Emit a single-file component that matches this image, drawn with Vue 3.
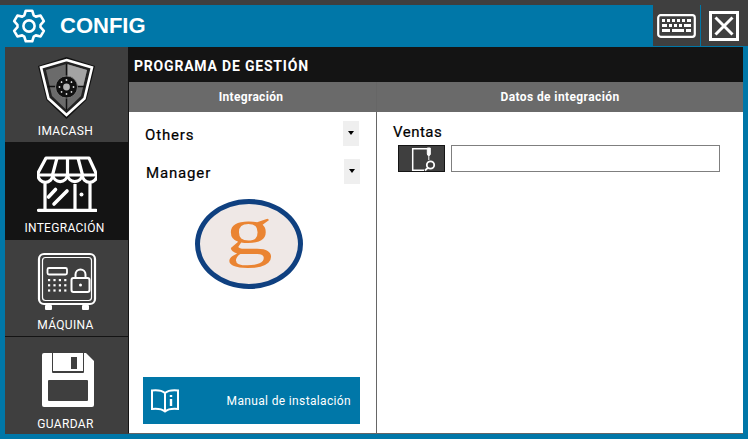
<script setup>
const studs = [0, 45, 90, 135, 180, 225, 270, 315]
const rows = [0, 1, 2]
const cols = [0, 1, 2, 3]

function gearPath() {
  const c = 17
  const pt = (r, deg) => {
    const a = (deg * Math.PI) / 180
    return `${(c + r * Math.cos(a)).toFixed(2)} ${(c + r * Math.sin(a)).toFixed(2)}`
  }
  const parts = []
  for (let i = 0; i < 6; i++) {
    const a = -90 + i * 60
    parts.push(pt(11.6, a - 24), pt(15.6, a - 12), pt(15.6, a + 12), pt(11.6, a + 24))
  }
  return 'M' + parts.join('L') + 'Z'
}
const gear = gearPath()
</script>

<template>
  <div class="app">
    <div class="strip"></div>
    <header class="titlebar">
      <svg class="gear" viewBox="0 0 34 34" fill="none" stroke="#fff" stroke-width="2.6" stroke-linejoin="round">
        <path :d="gear"/>
        <circle cx="17" cy="17" r="5.6"/>
      </svg>
      <h1 class="title">CONFIG</h1>
      <div class="tools">
        <button class="tool tool-keys">
          <svg width="39" height="24" viewBox="0 0 39 24">
            <rect x="1.200" y="1.200" width="36.600" height="21.600" rx="2.500" fill="none" stroke="#fff" stroke-width="2.200"/>
            <g fill="#fff">
              <rect x="5" y="5" width="3" height="3"/><rect x="10" y="5" width="3" height="3"/><rect x="15" y="5" width="3" height="3"/><rect x="20" y="5" width="3" height="3"/><rect x="25" y="5" width="3" height="3"/><rect x="30" y="5" width="4" height="3"/>
              <rect x="5" y="10" width="5" height="3"/><rect x="12" y="10" width="3" height="3"/><rect x="17" y="10" width="3" height="3"/><rect x="22" y="10" width="3" height="3"/><rect x="27" y="10" width="7" height="3"/>
              <rect x="5" y="15" width="8" height="3"/><rect x="15" y="15" width="12" height="3"/><rect x="29" y="15" width="5" height="3"/>
            </g>
          </svg>
        </button>
        <button class="tool tool-close">
          <svg width="30" height="30" viewBox="0 0 30 30">
            <rect x="1.500" y="1.500" width="27" height="27" fill="none" stroke="#fff" stroke-width="3"/>
            <path d="M6.500 6.500l17 17M23.500 6.500l-17 17" stroke="#fff" stroke-width="3" fill="none"/>
          </svg>
        </button>
      </div>
    </header>

    <div class="body">
      <nav class="sidebar">
        <div class="nav-item item-shield">
          <svg width="60" height="64" viewBox="36 56 60 64">
            <path d="M65.500 57L94 66L85.500 100L65.500 119L45.500 100L37 66Z" fill="#111"/>
            <path d="M65.500 60L91 67.500L83.500 98.500L65.500 115L47.500 98.500L40 67.500Z" fill="#222" stroke="#fff" stroke-width="2.600"/>
            <path d="M65.500 64L86 70L80 96L65.500 110L51 96L45 70Z" fill="#6b6b6b"/>
            <path d="M66.500 64.300L86 70L82.200 86H66.500Z" fill="#a3a3a3"/>
            <path d="M65.500 64V110M46.500 86.500H84" stroke="#111" stroke-width="1.500"/>
            <circle cx="65.500" cy="87" r="11" fill="#111" stroke="#8a8a8a" stroke-width=".8"/>
            <circle cx="65.500" cy="87" r="3.400" fill="#b5b5b5"/>
            <g fill="#ddd">
              <circle v-for="t in studs" :key="t" cx="65.500" cy="80" r=".9" :transform="`rotate(${t} 65.500 87)`"/>
            </g>
          </svg>
          <span class="nav-label">IMACASH</span>
        </div>
        <div class="nav-item item-store active">
          <svg width="60" height="56" viewBox="36 156 60 56" fill="none" stroke="#fff" stroke-width="3.200" stroke-linejoin="round">
            <path d="M45 158H88L94.500 172C95.500 174 95 175 93 175H39C37 175 36.500 174 37.500 172Z"/>
            <path d="M56 158L51.500 175M66.500 158V175M77 158L81.500 175"/>
            <path d="M37 175a7.400 7.400 0 0 0 14.800 0a7.400 7.400 0 0 0 14.700 0a7.400 7.400 0 0 0 14.700 0a7.400 7.400 0 0 0 14.800 0"/>
            <path d="M44 184V210M89 184V210M37.500 210.300H95" stroke-linecap="round"/>
            <path d="M74 184V210"/>
            <path d="M47.500 197L54.500 189.500M53 204L66 191" stroke-width="3.600" stroke-linecap="round"/>
            <circle cx="80.500" cy="194.500" r="2" fill="#fff" stroke="none"/>
          </svg>
          <span class="nav-label">INTEGRACIÓN</span>
        </div>
        <div class="nav-item item-safe">
          <svg width="60" height="60" viewBox="36 252 60 60" fill="none" stroke="#fff">
            <rect x="38" y="254" width="56" height="50" rx="5" stroke-width="2.200"/>
            <rect x="41.500" y="257.500" width="49" height="43" rx="3" stroke-width="1.200"/>
            <rect x="46.500" y="268" width="19.500" height="6.500" rx="1.500" stroke-width="1.800"/>
            <g fill="#fff" stroke="none">
              <template v-for="r in rows" :key="r">
                <rect v-for="c in cols" :key="c" :x="47 + c * 5.400" :y="279 + r * 5.200" width="2.200" height="2.200"/>
              </template>
              <rect x="44" y="305" width="7" height="5" rx="1"/>
              <rect x="81" y="305" width="7" height="5" rx="1"/>
            </g>
            <path d="M74.500 278v-3.500a5 5 0 0 1 10 0v3.500" stroke-width="2"/>
            <rect x="70.500" y="278" width="18" height="14" rx="2" stroke-width="2"/>
            <circle cx="79.500" cy="285" r="1.500" fill="#fff" stroke="none"/>
          </svg>
          <span class="nav-label">MÁQUINA</span>
        </div>
        <div class="nav-item item-disk">
          <svg width="52" height="54" viewBox="0 0 52 54">
            <path d="M2 0H44L52 8V52a2 2 0 0 1-2 2H2a2 2 0 0 1-2-2V2a2 2 0 0 1 2-2Z" fill="#fff"/>
            <path d="M10 0H42V19a1 1 0 0 1-1 1H11a1 1 0 0 1-1-1Z" fill="#3f3f3f"/>
            <path d="M11 0H41V18H11Z" fill="#fff"/>
            <rect x="29" y="4" width="6" height="12" fill="#3f3f3f"/>
            <rect x="6" y="27" width="40" height="21" rx="1" fill="#3f3f3f"/>
          </svg>
          <span class="nav-label">GUARDAR</span>
        </div>
      </nav>

      <main class="main">
        <div class="page-title">PROGRAMA DE GESTIÓN</div>
        <div class="columns">
          <section class="col col-left">
            <div class="col-head">Integración</div>
            <div class="col-body left-body">
              <div class="select">
                <span class="select-text">Others</span>
                <span class="arrow"></span>
              </div>
              <div class="select second">
                <span class="select-text">Manager</span>
                <span class="arrow"></span>
              </div>
              <div class="logo"><span>g</span></div>
              <button class="manual">
                <svg width="28" height="24" viewBox="0 0 28 24" fill="none" stroke="#fff" stroke-width="2">
                  <path d="M14 4C11 1.500 6 1 1 1.500V20C6 19.500 11 20 14 22.500C17 20 22 19.500 27 20V1.500C22 1 17 1.500 14 4ZM14 4V22"/>
                  <path d="M20 6v2M20 10v7" stroke-width="2.400"/>
                </svg>
                <span>Manual de instalación</span>
              </button>
            </div>
          </section>
          <section class="col col-right">
            <div class="col-head">Datos de integración</div>
            <div class="col-body right-body">
              <div class="field-label">Ventas</div>
              <div class="field">
                <button class="pick">
                  <svg width="26" height="26" viewBox="410 146 26 26" fill="none" stroke="#fff" stroke-width="1.500">
                    <path d="M427 148.700H412.700V170.300H424"/>
                    <path d="M427.300 148V154a1.500 1.500 0 0 0 3 0V148Z" fill="#fff" stroke-width="1"/>
                    <path d="M428.800 155V160" stroke-width="1"/>
                    <circle cx="430.500" cy="165" r="3.700" stroke-width="1.800"/>
                    <path d="M427.800 167.800L425 170.500" stroke-width="1.800"/>
                  </svg>
                </button>
                <input class="input" type="text" />
              </div>
            </div>
          </section>
        </div>
      </main>
    </div>
  </div>
</template>

<style>
html, body { margin: 0; padding: 0; overflow: hidden; }
</style>

<style scoped>
.app {
  width: 748px; height: 439px; background: #0077a8; display: flex; flex-direction: column;
  font-family: Roboto, "Liberation Sans", sans-serif; color: #000; overflow: hidden;
}
.strip { height: 5px; background: #3f3f3f; flex: none; }
.titlebar { height: 42px; flex: none; display: flex; align-items: stretch; padding-left: 12px; }
.gear { width: 34px; height: 34px; align-self: center; margin-bottom: 1px; flex: none; }
.title { margin: 0 0 0 14px; font: 700 22px/42px "Liberation Sans", sans-serif; color: #fff; }
.tools { margin-left: auto; display: flex; height: 41px; background: #3f3f3f; width: 95px; }
.tool { border: 0; padding: 0; background: transparent; display: flex; align-items: center; justify-content: center; }
.tool-keys { width: 47px; border-right: 1px solid #0077a8; box-sizing: content-box; }
.tool-close { flex: 1; padding-right: 1px; }
.body { flex: 1; min-height: 0; display: flex; padding: 0 5px 5px; }
.sidebar { width: 123px; flex: none; display: flex; flex-direction: column; background: #3f3f3f; }
.nav-item { display: flex; flex-direction: column; align-items: center; color: #fff; box-sizing: border-box; }
.nav-item svg { display: block; flex: none; }
.nav-label { margin-top: auto; margin-right: 2px; font-size: 12px; line-height: 14px; letter-spacing: .35px; }
.item-shield { height: 95px; padding: 9px 0 4px; }
.item-store { height: 98px; padding: 14px 0 5px; background: #141414; }
.item-store .nav-label { letter-spacing: .3px; margin-right: 4px; }
.item-safe { height: 96px; padding: 12px 0 4px; }
.item-disk { height: 97px; padding: 16px 0 2px; border-top: 1px solid #141414; }
.item-disk svg { margin-left: 2px; }
.main { flex: 1; min-width: 0; display: flex; flex-direction: column; border-left: 1px solid #141414; border-bottom: 1px solid #666; }
.page-title { height: 35px; margin-left: -1px; background: #141414; color: #fff; font-weight: 700; font-size: 14px; line-height: 38px; padding-left: 6px; flex: none; letter-spacing: .8px; }
.columns { flex: 1; min-height: 0; display: flex; background: #fff; }
.col { display: flex; flex-direction: column; }
.col-left { width: 247px; border-right: 1px solid #666; flex: none; }
.col-right { flex: 1; min-width: 0; }
.col-head { height: 30px; flex: none; background: #6a6a6a; color: #fff; text-align: center; font-size: 12px; font-weight: 700; line-height: 31px; letter-spacing: .4px; }
.col-left .col-head { padding-right: 3px; box-sizing: border-box; letter-spacing: .3px; }
.col-body { flex: 1; min-height: 0; }
.left-body { display: flex; flex-direction: column; padding: 9px 16px 9px 14px; box-sizing: border-box; }
.select { height: 25px; display: flex; align-items: center; justify-content: space-between; font-size: 15px; letter-spacing: .85px; padding: 0 1px 0 2px; font-weight: 400; -webkit-text-stroke: .2px #000; }
.select-text { margin-top: 3px; }
.select.second { margin-top: 13px; padding: 0 0 0 3px; }
.arrow { width: 16px; height: 25px; background: #efefef; position: relative; }
.arrow::after { content: ""; position: absolute; left: 5px; top: 10px; border: 3px solid transparent; border-top: 4px solid #000; border-bottom: 0; }
.logo { width: 108px; height: 90px; margin: 15px 0 0 52px; box-sizing: border-box; border: 5px solid #0f4080; border-radius: 50%; background: #efe8e6; display: flex; align-items: center; justify-content: center; flex: none; }
.logo span { font: 400 68px/1 "Liberation Serif", serif; color: #ea8432; transform: translateY(-13px) scaleX(1.4); }
.manual { margin-top: auto; height: 47px; border: 0; background: #0077a8; color: #fff; display: flex; align-items: center; justify-content: space-between; padding: 0 9px 0 8px; font: 400 12px Roboto, sans-serif; letter-spacing: .35px; }
.right-body { padding: 11px 23px 0 16px; }
.field-label { font-size: 15px; line-height: 18px; letter-spacing: .5px; font-weight: 400; -webkit-text-stroke: .2px #000; }
.field { display: flex; gap: 6px; margin: 4px 0 0 5px; height: 27px; }
.pick { width: 47px; padding: 0 0 0 3px; border: 1px solid #141414; background: #3f3f3f; display: flex; align-items: center; justify-content: center; box-sizing: border-box; }
.input { flex: 1; min-width: 0; box-sizing: border-box; border: 1px solid #7f7f7f; background: #fff; padding: 0; margin: 0; outline: 0; }
</style>
